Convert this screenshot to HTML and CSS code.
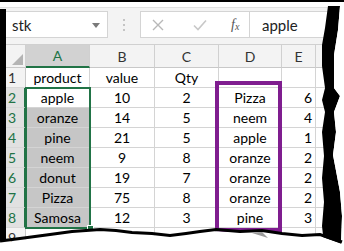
FILE: index.html
```html
<!DOCTYPE html>
<html>
<head>
<meta charset="utf-8">
<link rel="stylesheet" href="styles.css">
</head>
<body>
<div class="page">
  <div class="topgap"></div>
  <div class="fbar">
    <div class="namebox">
      <span class="nb-text">stk</span>
      <svg class="nb-arrow" width="8" height="5" viewBox="0 0 8 5"><path d="M0 0H8L4 5Z" fill="#7a7a7a"/></svg>
    </div>
    <div class="grip"><i></i><i></i><i></i></div>
    <div class="btns">
      <span class="b-x">
        <svg width="12" height="12" viewBox="0 0 12 12"><path d="M1 1L11 11M11 1L1 11" stroke="#b8b8b8" stroke-width="1.4"/></svg>
      </span>
      <span class="b-ok">
        <svg width="14" height="12" viewBox="0 0 14 12"><path d="M1 6.5L5 10.5L13 1.5" stroke="#c8c8c8" stroke-width="1.6" fill="none"/></svg>
      </span>
      <span class="b-fx"><i>f</i><sub>x</sub></span>
    </div>
    <div class="finput">apple</div>
  </div>
  <div class="sheet">
    <div class="corner"><svg width="11" height="11" viewBox="0 0 11 11"><path d="M11 0V11H0Z" fill="#b4b4b4"/></svg></div>
    <div class="ch sel-h">A</div>
    <div class="ch">B</div>
    <div class="ch">C</div>
    <div class="ch">D</div>
    <div class="ch">E</div>
    <div class="ch last"></div>

    <div class="rh">1</div>
    <div class="c ctr">product</div><div class="c ctr">value</div><div class="c ctr">Qty</div><div class="c ctr"></div><div class="c"></div><div class="c last"></div>

    <div class="rh srh">2</div>
    <div class="c ctr act">apple</div><div class="c ctr">10</div><div class="c ctr">2</div><div class="c ctr">Pizza</div><div class="c rt">6</div><div class="c last"></div>

    <div class="rh srh">3</div>
    <div class="c ctr hl">oranze</div><div class="c ctr">14</div><div class="c ctr">5</div><div class="c ctr">neem</div><div class="c rt">4</div><div class="c last"></div>

    <div class="rh srh">4</div>
    <div class="c ctr hl">pine</div><div class="c ctr">21</div><div class="c ctr">5</div><div class="c ctr">apple</div><div class="c rt">1</div><div class="c last"></div>

    <div class="rh srh">5</div>
    <div class="c ctr hl">neem</div><div class="c ctr">9</div><div class="c ctr">8</div><div class="c ctr">oranze</div><div class="c rt">2</div><div class="c last"></div>

    <div class="rh srh">6</div>
    <div class="c ctr hl">donut</div><div class="c ctr">19</div><div class="c ctr">7</div><div class="c ctr">oranze</div><div class="c rt">2</div><div class="c last"></div>

    <div class="rh srh">7</div>
    <div class="c ctr hl">Pizza</div><div class="c ctr">75</div><div class="c ctr">8</div><div class="c ctr">oranze</div><div class="c rt">2</div><div class="c last"></div>

    <div class="rh srh">8</div>
    <div class="c ctr hl">Samosa</div><div class="c ctr">12</div><div class="c ctr">3</div><div class="c ctr">pine</div><div class="c rt">3</div><div class="c last"></div>

    <div class="rh">9</div>
    <div class="c"></div><div class="c"></div><div class="c"></div><div class="c"></div><div class="c"></div><div class="c last"></div>
  </div>

  <div class="selbox"><span class="handle"></span></div>
  <div class="purple"></div>

  <svg class="torn" width="344" height="251" viewBox="0 0 344 251">
    <rect x="0" y="0" width="344" height="2" fill="#000"/>
    <rect x="0" y="9" width="6" height="232" fill="#000"/>
    <path d="M328 6 L340 6 L338 30 L334 55 L334 88 L340 96 L334 112 L336 132 L333 155 L337 176 L340 192 L342 216 L341 244 L324 244 L322 226 L324 202 L322 178 L324 156 L322 132 L325 112 L322 100 L325 88 L322 66 L322 45 L325 28 Z" fill="#000"/>
    <path d="M340 6 L344 6 L344 251 L341 251 L341 244 L342 216 L340 192 L337 176 L333 155 L336 132 L334 112 L340 96 L334 88 L334 55 L338 30 Z" fill="#fff"/>
    <path d="M0 243 L20 240 L50 236 L72 233 L100 231 L116 232 L132 234 L152 235 L170 237 L186 235 L200 233 L216 231 L240 233 L262 232 L282 235 L302 237 L320 236 L342 244 L344 244 L344 251 L0 251 Z" fill="#fff"/>
    <path d="M0 241 L20 238.5 L50 234.5 L72 231.5 L100 229.5 L116 230.5 L132 232.5 L152 233.5 L170 235.5 L186 233.5 L200 231.5 L216 229.5 L240 231.5 L262 230.5 L282 233.5 L302 235.5 L320 234.5 L342 242" stroke="#000" stroke-width="3.2" fill="none"/>
    <path d="M252 233 L262 232 L268 238 Z" fill="#9a9a9a"/>
  </svg>
</div>
</body>
</html>
```

FILE: styles.css
```css
* { box-sizing: border-box; }
html, body { margin: 0; padding: 0; background: #fff; }
body { width: 344px; height: 251px; overflow: hidden; font-family: Lato, "Open Sans", sans-serif; color: #1e1e1e; }
.page { position: relative; width: 344px; height: 251px; overflow: hidden; }
.topgap { height: 7px; background: #fff; }
.fbar {
  height: 38px; background: #f3f3f3; border-top: 1px solid #e0e0e0; border-bottom: 1px solid #d0d0d0;
  display: flex; align-items: flex-start; padding-top: 3px;
}
.namebox {
  width: 108px; height: 27px; background: #fff; border: 1px solid #d4d4d4; border-left: none;
  display: flex; align-items: center; justify-content: space-between; padding: 0 7px 0 12px;
}
.nb-text { font-size: 15px; color: #222; }
.nb-arrow { margin-top: 1px; }
.grip { width: 32px; height: 27px; display: flex; flex-direction: column; align-items: center; justify-content: center; gap: 3px; }
.grip i { display: block; width: 2px; height: 2px; background: #c4c4c4; }
.btns {
  width: 110px; height: 27px; background: #fff; border: 1px solid #d4d4d4;
  display: flex; align-items: center; padding-left: 11px;
}
.b-x { width: 41px; display: flex; }
.b-ok { width: 38px; display: flex; }
.b-fx { font-family: "Liberation Serif", serif; font-size: 14px; color: #555; }
.b-fx i { font-style: italic; }
.b-fx sub { font-size: 10px; font-style: italic; vertical-align: -1px; }
.finput {
  flex: 1; height: 27px; background: #fff; border: 1px solid #d4d4d4; border-left: none;
  font-size: 15px; padding-left: 12px; display: flex; align-items: center; color: #222;
}
.sheet {
  display: grid;
  grid-template-columns: 26px 64px 65px 64px 63px 34px 1fr;
  grid-template-rows: 23px repeat(9, 20px);
  font-size: 14px;
}
.corner { background: #f3f3f3; border-right: 1px solid #d0d0d0; border-bottom: 1px solid #c8c8c8; display: flex; align-items: flex-end; justify-content: flex-end; padding: 0 2px 2px 0; }
.ch { background: #f3f3f3; border-right: 1px solid #d0d0d0; border-bottom: 1px solid #c8c8c8; display: flex; align-items: center; justify-content: center; font-size: 14px; color: #333; }
.ch.sel-h { background: #d2d2d2; border-bottom: 2px solid #217346; color: #217346; }
.rh { background: #f3f3f3; border-right: 1px solid #c8c8c8; border-bottom: 1px solid #d8d8d8; display: flex; align-items: center; padding-left: 8px; font-size: 14px; color: #333; }
.rh.srh { background: #e1e1e1; color: #217346; border-right: 2px solid #217346; }
.c { border-right: 1px solid #d4d4d4; border-bottom: 1px solid #d4d4d4; display: flex; align-items: center; padding: 0 3px; white-space: nowrap; color: #000; }
.c.ctr { justify-content: center; }
.c.rt { justify-content: flex-end; }
.c.hl { background: #c6c6c6; }
.c.last { border-right: none; }
.ch.last { border-right: none; }
.selbox { position: absolute; left: 25px; top: 87px; width: 66px; height: 142px; border: 2px solid #217346; }
.handle { position: absolute; right: -5px; bottom: -5px; width: 7px; height: 7px; background: #217346; border: 1px solid #fff; }
.purple { position: absolute; left: 215px; top: 81px; width: 67px; height: 151px; border: 4px solid #7f1d8f; }
.torn { position: absolute; left: 0; top: 0; }
```
